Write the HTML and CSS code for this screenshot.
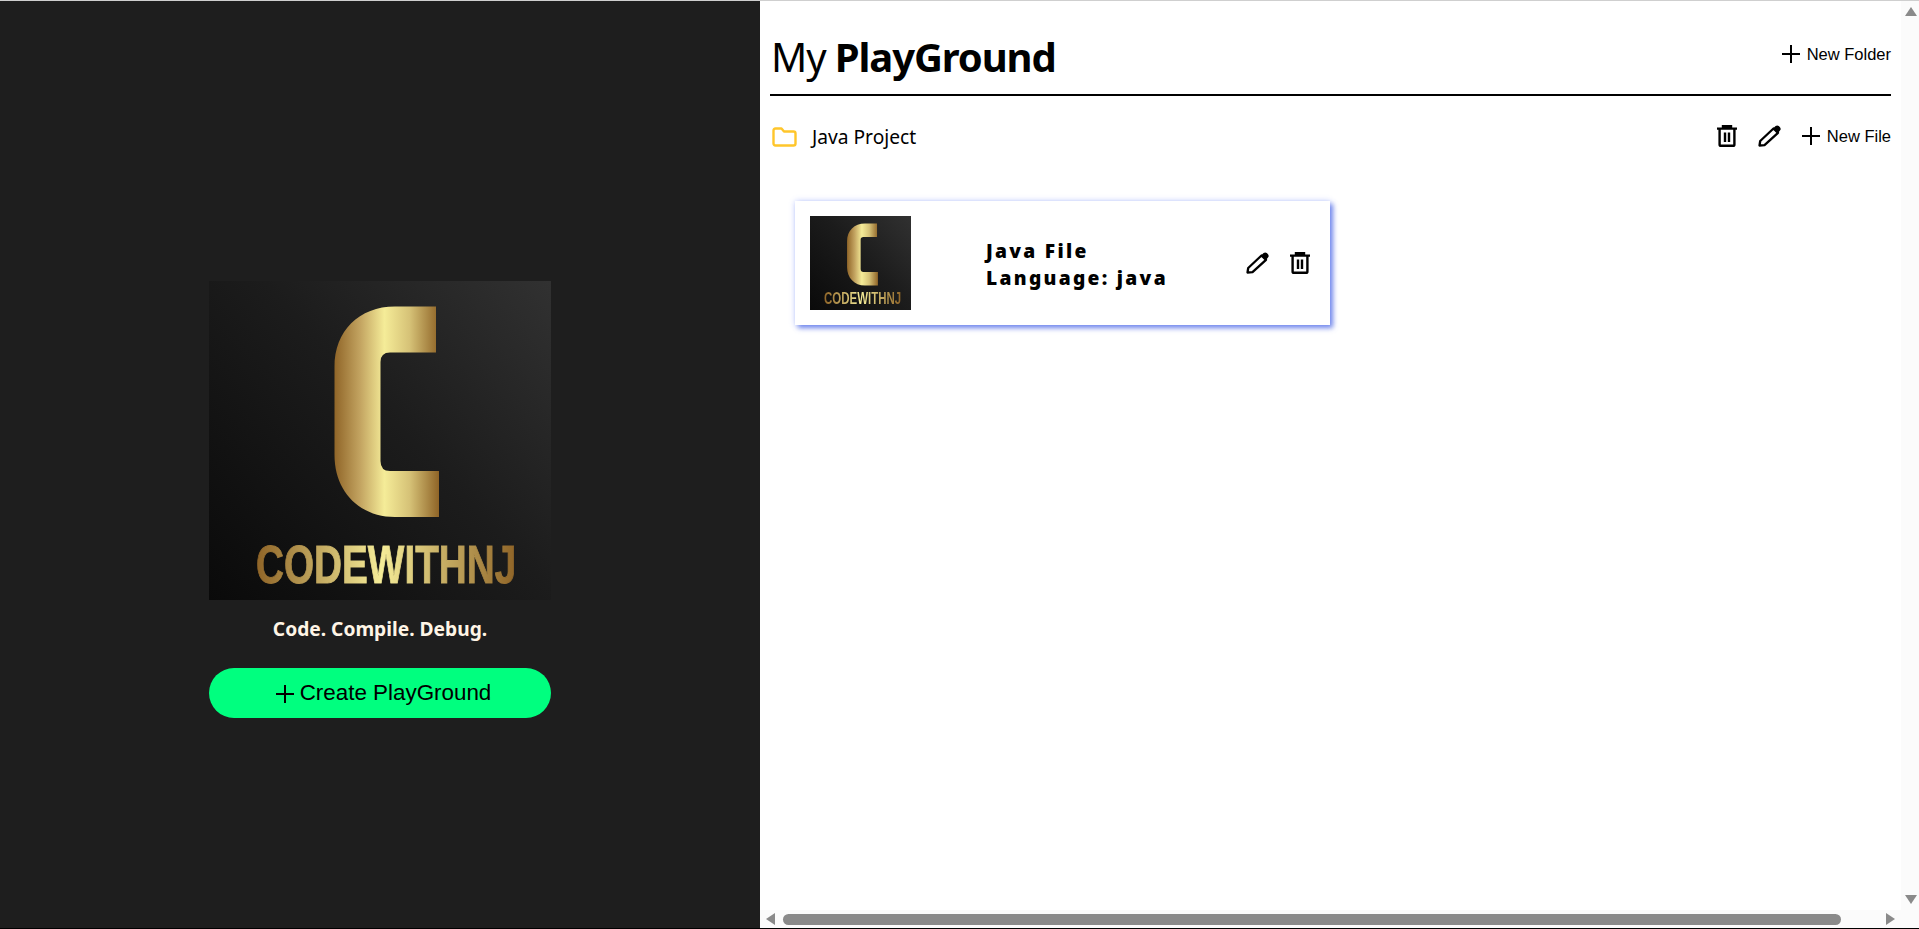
FILE: index.html
```html
<!DOCTYPE html>
<html lang="en">
<head>
    <meta charset="UTF-8">
    <meta name="viewport" content="width=device-width, initial-scale=1.0">
    <title>My PlayGround</title>
    <link rel="stylesheet" href="styles.css">
</head>
<body>
    <!-- shared icons and gradients -->
    <svg class="defs" width="0" height="0">
        <defs>
            <linearGradient id="logo-bg" gradientUnits="userSpaceOnUse" x1="0" y1="319" x2="342" y2="0">
                <stop offset="0" stop-color="#0a0a0a"/>
                <stop offset="0.55" stop-color="#1c1c1c"/>
                <stop offset="1" stop-color="#313131"/>
            </linearGradient>
            <linearGradient id="gold-c" gradientUnits="userSpaceOnUse" x1="125" y1="0" x2="230" y2="0">
                <stop offset="0" stop-color="#8f6427"/>
                <stop offset="0.25" stop-color="#c3a461"/>
                <stop offset="0.48" stop-color="#f5ec98"/>
                <stop offset="0.72" stop-color="#d6c277"/>
                <stop offset="1" stop-color="#8f6427"/>
            </linearGradient>
        </defs>
        <symbol id="logo-bg-c" viewBox="0 0 342 319" preserveAspectRatio="none">
            <rect width="342" height="319" fill="url(#logo-bg)"/>
            <path fill="url(#gold-c)" d="M227 25.5V71.5H181Q171.5 71.5 171.5 81V180Q171.5 190 181 190H230V236H186C150 236 125.5 210 125.5 174V86C125.5 50 150 25.5 186 25.5Z"/>
        </symbol>
        <symbol id="icon-plus" viewBox="0 0 18 18">
            <path d="M9 0V18M0 9H18" fill="none" stroke="currentColor" stroke-width="2"/>
        </symbol>
        <symbol id="icon-trash" viewBox="0 0 20 22">
            <path d="M0 3.6H20M6 3.6V1.2H14V3.6M2.6 3.6V19.4Q2.6 20.8 4 20.8H16Q17.4 20.8 17.4 19.4V3.6M8 7.5V17M12 7.5V17" fill="none" stroke="currentColor" stroke-width="2.4"/>
        </symbol>
        <symbol id="icon-pencil" viewBox="0 0 23 22">
            <path d="M1.5 20.5L2.2 16L15.5 3.5L20 7.8L6.5 20.2Z" fill="none" stroke="currentColor" stroke-width="2.3" stroke-linejoin="round"/>
            <path d="M15 3.6L17.6 1Q19.2 -0.2 20.8 1L22 2.2Q23.4 4 22 5.6L19.6 8.4Z" fill="currentColor"/>
        </symbol>
    </svg>

    <aside class="side">
        <div class="logo side-logo">
            <svg class="logo-art"><use href="#logo-bg-c"/></svg>
            <span class="logo-word">CODEWITHNJ</span>
        </div>
        <p class="tagline">Code. Compile. Debug.</p>
        <button class="create-btn">
            <svg class="plus-big"><use href="#icon-plus"/></svg>
            Create PlayGround
        </button>
    </aside>

    <div class="panel">
        <main class="content">
            <header class="page-head">
                <h1 class="page-title">My <b>PlayGround</b></h1>
                <button class="text-btn head-btn"><svg class="plus"><use href="#icon-plus"/></svg>New Folder</button>
            </header>

            <div class="folder-row">
                <svg class="folder-icon" viewBox="0 0 25 20">
                    <path d="M1.5 3.5Q1.5 1.5 3.5 1.5H9.5L12 4.5H21.5Q23.5 4.5 23.5 6.5V16.5Q23.5 18.5 21.5 18.5H3.5Q1.5 18.5 1.5 16.5Z" fill="none" stroke="#ffc62b" stroke-width="2.4" stroke-linejoin="round"/>
                </svg>
                <span class="folder-name">Java Project</span>
                <div class="folder-actions">
                    <svg class="trash"><use href="#icon-trash"/></svg>
                    <svg class="pencil"><use href="#icon-pencil"/></svg>
                    <button class="text-btn"><svg class="plus"><use href="#icon-plus"/></svg>New File</button>
                </div>
            </div>

            <div class="cards">
                <article class="card">
                    <div class="logo card-thumb">
                        <svg class="logo-art"><use href="#logo-bg-c"/></svg>
                        <span class="logo-word">CODEWITHNJ</span>
                    </div>
                    <div class="card-text">
                        <p>Java File</p>
                        <p>Language: java</p>
                    </div>
                    <div class="card-actions">
                        <svg class="pencil"><use href="#icon-pencil"/></svg>
                        <svg class="trash"><use href="#icon-trash"/></svg>
                    </div>
                </article>
            </div>
        </main>

        <div class="vbar">
            <span class="arrow arrow-up"></span>
            <span class="arrow arrow-down"></span>
        </div>
        <div class="hbar">
            <span class="arrow arrow-left"></span>
            <span class="hbar-thumb"></span>
            <span class="arrow arrow-right"></span>
        </div>
        <div class="bar-corner"></div>
    </div>
</body>
</html>
```

FILE: styles.css
```css
* {
    box-sizing: border-box;
}

html {
    height: 100%;
    overflow: hidden;
}

body {
    margin: 0;
    height: 100%;
    display: flex;
    border-top: 1px solid #cfcfcf;
    border-bottom: 1px solid #000;
    font-family: "Noto Sans", "Open Sans", sans-serif;
    color: #000;
    background-color: #fff;
    overflow: hidden;
}

.defs {
    position: absolute;
}

p {
    margin: 0;
}

button {
    border: none;
    background: none;
    padding: 0;
    color: #000;
    font-family: "Liberation Sans", Arial, sans-serif;
    cursor: pointer;
}

/* logo, the word sits over the drawn C */
.logo {
    position: relative;
    flex-shrink: 0;
}

.logo-art {
    display: block;
    width: 100%;
    height: 100%;
}

.logo-word {
    position: absolute;
    width: max-content;
    font-family: "Liberation Sans", sans-serif;
    font-weight: bold;
    line-height: 1;
    white-space: nowrap;
    transform: scaleX(0.717);
    transform-origin: left top;
    color: transparent;
    background-image: linear-gradient(90deg, #8f6427, #f5ec98 48%, #8f6427);
    -webkit-background-clip: text;
    background-clip: text;
}

.side-logo {
    width: 342px;
    height: 319px;
}

.side-logo .logo-word {
    left: 47px;
    top: 256px;
    font-size: 54px;
    -webkit-text-stroke: 1px transparent;
}

/* left side */
.side {
    width: 760px;
    flex-shrink: 0;
    padding-top: 70px;
    background-color: #1e1e1e;
    display: flex;
    flex-direction: column;
    align-items: center;
    justify-content: center;
}

.tagline {
    margin-top: 17px;
    font-size: 19.2px;
    line-height: 24px;
    font-weight: 700;
    color: #fff5e6;
}

.create-btn {
    margin-top: 27px;
    padding-left: 7px;
    width: 342px;
    height: 50px;
    border-radius: 25px;
    background-color: #00ff7f;
    font-size: 22.4px;
    display: flex;
    align-items: center;
    justify-content: center;
    gap: 6px;
}

.plus-big {
    width: 18px;
    height: 18px;
    margin-top: 2px;
}

/* right side */
.panel {
    flex: 1;
    min-width: 0;
    min-height: 0;
    display: grid;
    grid-template-columns: 1fr 18px;
    grid-template-rows: 1fr 18px;
}

.content {
    padding: 0 10px;
    min-width: 0;
    min-height: 0;
}

.page-head {
    height: 95px;
    border-bottom: 2px solid #000;
    display: flex;
    justify-content: space-between;
    align-items: center;
    padding-top: 19px;
}

.page-title {
    margin: 0 0 0 1px;
    font-size: 40px;
    line-height: 54px;
    font-weight: 400;
    letter-spacing: -1.1px;
}

.page-title b {
    font-weight: 700;
}

.text-btn {
    display: flex;
    align-items: center;
    gap: 7px;
    font-size: 16.5px;
    line-height: 20px;
}

.head-btn {
    margin-bottom: 6px;
}

.plus {
    width: 18px;
    height: 18px;
}

.folder-row {
    height: 81px;
    display: flex;
    align-items: center;
    padding-left: 2px;
}

.folder-icon {
    width: 25px;
    height: 20px;
}

.folder-name {
    margin-left: 15px;
    font-size: 19.2px;
}

.folder-actions {
    margin-left: auto;
    margin-bottom: 2px;
    display: flex;
    align-items: center;
    gap: 21px;
}

.trash {
    width: 20px;
    height: 22px;
}

.pencil {
    width: 23px;
    height: 22px;
}

.cards {
    margin-top: 24px;
    padding-left: 25px;
}

.card {
    width: 535px;
    height: 124px;
    padding: 15px 20px 15px 15px;
    display: flex;
    align-items: center;
    background-color: #fff;
    box-shadow: 0 0 6px rgba(90, 120, 255, 0.3), 3px 3px 5px rgba(60, 90, 225, 0.7);
}

.card-thumb {
    width: 101px;
    height: 94px;
}

.card-thumb .logo-word {
    left: 14px;
    top: 75px;
    font-size: 16px;
}

.card-text {
    margin-left: 75px;
    padding-top: 2px;
    font-size: 19.2px;
    line-height: 27px;
    font-weight: 900;
    letter-spacing: 2.3px;
}

.card-actions {
    margin-left: auto;
    display: flex;
    align-items: center;
    gap: 21px;
}

/* scrollbars */
.vbar, .hbar, .bar-corner {
    background-color: #fbfbfb;
}

.vbar {
    display: flex;
    flex-direction: column;
    justify-content: space-between;
    align-items: center;
    padding: 6px 0 6px 1px;
}

.hbar {
    display: flex;
    align-items: center;
    padding: 0 6px;
}

.hbar-thumb {
    flex: 1;
    height: 11px;
    margin: 0 45px 0 8px;
    border-radius: 6px;
    background-color: #8a8a8a;
}

.arrow {
    width: 0;
    height: 0;
    border-style: solid;
    border-color: transparent;
}

.arrow-up {
    border-width: 0 6.5px 9px;
    border-bottom-color: #8a8a8a;
}

.arrow-down {
    border-width: 9px 6.5px 0;
    border-top-color: #8a8a8a;
}

.arrow-left {
    border-width: 6.5px 9px 6.5px 0;
    border-right-color: #8a8a8a;
}

.arrow-right {
    border-width: 6.5px 0 6.5px 9px;
    border-left-color: #8a8a8a;
}
```
